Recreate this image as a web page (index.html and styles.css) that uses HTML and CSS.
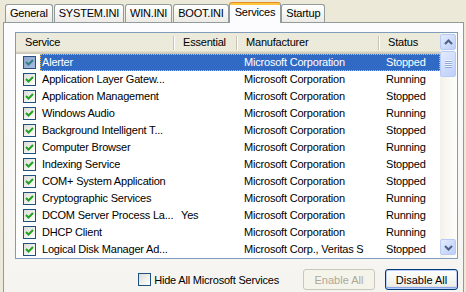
FILE: index.html
```html
<!DOCTYPE html>
<html lang="en">
<head>
    <meta charset="UTF-8">
    <title>System Configuration Utility - Services</title>
    <link rel="stylesheet" href="styles.css">
</head>
<body>
    <div class="dialog">
        <div class="tabs">
            <div class="tab">General</div>
            <div class="tab">SYSTEM.INI</div>
            <div class="tab">WIN.INI</div>
            <div class="tab">BOOT.INI</div>
            <div class="tab active">Services</div>
            <div class="tab">Startup</div>
        </div>
        <div class="page">
            <div class="listview">
                <div class="list-main">
                    <div class="list-header">
                        <div class="hcol">Service</div>
                        <div class="hcol">Essential</div>
                        <div class="hcol">Manufacturer</div>
                        <div class="hcol last">Status</div>
                    </div>
                    <div class="list-rows">
                        <div class="row selected">
                            <div class="cell name"><span class="cb on"><svg width="11" height="11" viewBox="0 0 11 11"><polyline points="2,5 4.5,7.5 9,3" /></svg></span><span class="label">Alerter</span></div>
                            <div class="cell"></div>
                            <div class="cell">Microsoft Corporation</div>
                            <div class="cell">Stopped</div>
                        </div>
                        <div class="row">
                            <div class="cell name"><span class="cb on"><svg width="11" height="11" viewBox="0 0 11 11"><polyline points="2,5 4.5,7.5 9,3" /></svg></span><span class="label">Application Layer Gatew...</span></div>
                            <div class="cell"></div>
                            <div class="cell">Microsoft Corporation</div>
                            <div class="cell">Running</div>
                        </div>
                        <div class="row">
                            <div class="cell name"><span class="cb on"><svg width="11" height="11" viewBox="0 0 11 11"><polyline points="2,5 4.5,7.5 9,3" /></svg></span><span class="label">Application Management</span></div>
                            <div class="cell"></div>
                            <div class="cell">Microsoft Corporation</div>
                            <div class="cell">Stopped</div>
                        </div>
                        <div class="row">
                            <div class="cell name"><span class="cb on"><svg width="11" height="11" viewBox="0 0 11 11"><polyline points="2,5 4.5,7.5 9,3" /></svg></span><span class="label">Windows Audio</span></div>
                            <div class="cell"></div>
                            <div class="cell">Microsoft Corporation</div>
                            <div class="cell">Running</div>
                        </div>
                        <div class="row">
                            <div class="cell name"><span class="cb on"><svg width="11" height="11" viewBox="0 0 11 11"><polyline points="2,5 4.5,7.5 9,3" /></svg></span><span class="label">Background Intelligent T...</span></div>
                            <div class="cell"></div>
                            <div class="cell">Microsoft Corporation</div>
                            <div class="cell">Stopped</div>
                        </div>
                        <div class="row">
                            <div class="cell name"><span class="cb on"><svg width="11" height="11" viewBox="0 0 11 11"><polyline points="2,5 4.5,7.5 9,3" /></svg></span><span class="label">Computer Browser</span></div>
                            <div class="cell"></div>
                            <div class="cell">Microsoft Corporation</div>
                            <div class="cell">Running</div>
                        </div>
                        <div class="row">
                            <div class="cell name"><span class="cb on"><svg width="11" height="11" viewBox="0 0 11 11"><polyline points="2,5 4.5,7.5 9,3" /></svg></span><span class="label">Indexing Service</span></div>
                            <div class="cell"></div>
                            <div class="cell">Microsoft Corporation</div>
                            <div class="cell">Stopped</div>
                        </div>
                        <div class="row">
                            <div class="cell name"><span class="cb on"><svg width="11" height="11" viewBox="0 0 11 11"><polyline points="2,5 4.5,7.5 9,3" /></svg></span><span class="label">COM+ System Application</span></div>
                            <div class="cell"></div>
                            <div class="cell">Microsoft Corporation</div>
                            <div class="cell">Stopped</div>
                        </div>
                        <div class="row">
                            <div class="cell name"><span class="cb on"><svg width="11" height="11" viewBox="0 0 11 11"><polyline points="2,5 4.5,7.5 9,3" /></svg></span><span class="label">Cryptographic Services</span></div>
                            <div class="cell"></div>
                            <div class="cell">Microsoft Corporation</div>
                            <div class="cell">Running</div>
                        </div>
                        <div class="row">
                            <div class="cell name"><span class="cb on"><svg width="11" height="11" viewBox="0 0 11 11"><polyline points="2,5 4.5,7.5 9,3" /></svg></span><span class="label">DCOM Server Process La...</span></div>
                            <div class="cell">Yes</div>
                            <div class="cell">Microsoft Corporation</div>
                            <div class="cell">Running</div>
                        </div>
                        <div class="row">
                            <div class="cell name"><span class="cb on"><svg width="11" height="11" viewBox="0 0 11 11"><polyline points="2,5 4.5,7.5 9,3" /></svg></span><span class="label">DHCP Client</span></div>
                            <div class="cell"></div>
                            <div class="cell">Microsoft Corporation</div>
                            <div class="cell">Running</div>
                        </div>
                        <div class="row">
                            <div class="cell name"><span class="cb on"><svg width="11" height="11" viewBox="0 0 11 11"><polyline points="2,5 4.5,7.5 9,3" /></svg></span><span class="label">Logical Disk Manager Ad...</span></div>
                            <div class="cell"></div>
                            <div class="cell">Microsoft Corp., Veritas S</div>
                            <div class="cell">Stopped</div>
                        </div>
                    </div>
                </div>
                <div class="scrollbar">
                    <div class="sb-btn"><svg width="15" height="15" viewBox="0 0 15 15"><polyline points="4,9 7.5,5.5 11,9" /></svg></div>
                    <div class="sb-thumb"><svg width="7" height="8" viewBox="0 0 7 8"><path d="M0 0.5H7M0 2.5H7M0 4.5H7M0 6.5H7" /></svg></div>
                    <div class="sb-track"></div>
                    <div class="sb-btn"><svg width="15" height="15" viewBox="0 0 15 15"><polyline points="4,6 7.5,9.5 11,6" /></svg></div>
                </div>
            </div>
            <div class="actions">
                <label class="hide-ms"><span class="cb"></span>Hide All Microsoft Services</label>
                <button class="btn" disabled>Enable All</button>
                <button class="btn default">Disable All</button>
            </div>
        </div>
    </div>
</body>
</html>
```

FILE: styles.css
```css
body {
    margin: 0;
    background-color: #ece9d8; /* XP dialog face */
    font-family: "Liberation Sans", Arial, sans-serif;
    font-size: 11px;
    letter-spacing: -0.2px;
    color: #000;
}

.dialog {
    width: 466px;
    height: 292px;
    overflow: hidden;
}

/* tab strip */
.tabs {
    display: flex;
    align-items: flex-end;
    height: 22px;
    padding-left: 5px;
}

.tab {
    box-sizing: border-box;
    height: 18px;
    line-height: 16px;
    padding: 0 4px;
    margin-right: 1px;
    border: 1px solid #919b9c;
    border-bottom: none;
    border-radius: 3px 3px 0 0;
    background: linear-gradient(#ffffff, #ecebe6);
}

.tab.active {
    position: relative;
    z-index: 2;
    height: 21px;
    line-height: 19px;
    margin: 0 0 -1px -1px;
    padding: 0 5px;
    border-top-color: #e68b2c;
    background: linear-gradient(#ffc73c 0, #ffc73c 2px, #fcfcfe 2px);
}

/* tab page */
.page {
    box-sizing: border-box;
    width: 461px;
    height: 300px;
    margin-left: 3px;
    padding: 9px 0 0 11px;
    border: 1px solid #919b9c;
    background: linear-gradient(#fcfcfe, #f4f3ee);
}

.listview {
    box-sizing: border-box;
    display: flex;
    width: 443px;
    height: 227px;
    border: 1px solid #7f9db9;
    background-color: #fff;
}

.list-main {
    flex: 1;
    overflow: hidden;
}

.list-header,
.row {
    display: grid;
    grid-template-columns: 158px 63px 142px 61px;
}

.list-header {
    height: 21px;
    line-height: 19px;
    background-color: #ebeadb;
    box-shadow: inset 0 -1px #cbc7b8, inset 0 -2px #d6d2c2, inset 0 -3px #e2decd;
}

.hcol {
    position: relative;
    padding-left: 9px;
}

.hcol::after {
    content: "";
    position: absolute;
    right: 0;
    top: 3px;
    width: 1px;
    height: 14px;
    background-color: #c7c5b2;
    box-shadow: 1px 0 #fff;
}

.hcol.last::after {
    display: none;
}

.list-rows {
    height: 204px;
    overflow: hidden;
}

.row {
    position: relative;
    height: 17px;
    line-height: 17px;
}

.cell {
    padding-left: 7px;
    white-space: nowrap;
    overflow: hidden;
}

.cell.name {
    display: flex;
    align-items: center;
}

.cell.name .label {
    padding: 0 2px;
    margin-left: 4px;
}

.row.selected {
    color: #fff;
}

.row.selected::before {
    content: "";
    position: absolute;
    left: 24px;
    right: 0;
    top: 0;
    bottom: 0;
    z-index: 0;
    box-sizing: border-box;
    background-color: #316ac5;
    border: 1px dotted #f3b64a;
}

.row.selected .cell {
    position: relative;
    z-index: 1;
}

/* checkboxes */
.cb {
    box-sizing: border-box;
    display: inline-block;
    flex: none;
    width: 13px;
    height: 13px;
    border: 1px solid #1c5180;
    background: linear-gradient(135deg, #dcdcd7, #ffffff);
}

.cb svg {
    display: block;
}

.cb polyline {
    fill: none;
    stroke: #21a121;
    stroke-width: 2;
}

.row.selected .cb {
    background: linear-gradient(135deg, #8ea4cb, #a9bde2);
    border-color: #2a4f7e;
}

.row.selected .cb polyline {
    stroke: #2f8183;
}

/* scrollbar */
.scrollbar {
    display: flex;
    flex-direction: column;
    width: 17px;
    background: linear-gradient(to right, #f3f1ec, #fefefb);
}

.sb-btn,
.sb-thumb {
    box-sizing: border-box;
    width: 16px;
    border: 1px solid #b7cbf5;
    border-radius: 2px;
    background: linear-gradient(135deg, #e3ebfe, #bccefa);
}

.sb-btn {
    height: 16px;
    margin-top: 1px;
}

.sb-btn svg {
    display: block;
}

.sb-btn polyline {
    fill: none;
    stroke: #4d6185;
    stroke-width: 2;
}

.sb-thumb {
    display: flex;
    align-items: center;
    justify-content: center;
    height: 26px;
    margin-top: 1px;
}

.sb-thumb path {
    stroke: #eef3fe;
    stroke-width: 1;
}

.sb-thumb svg {
    filter: drop-shadow(0 1px 0 #8fa9e6);
}

.sb-track {
    flex: 1;
}

.scrollbar .sb-btn:last-child {
    margin: 0 0 3px 0;
}

/* bottom row */
.actions {
    display: flex;
    align-items: center;
    justify-content: flex-end;
    width: 443px;
    margin-top: 10px;
    gap: 10px;
}

.hide-ms {
    display: flex;
    align-items: center;
    gap: 3px;
    margin-right: 14px;
}

.btn {
    box-sizing: border-box;
    width: 72px;
    height: 21px;
    padding: 0;
    font: inherit;
    border: 1px solid #003c74;
    border-radius: 3px;
    background: linear-gradient(#fefefe, #f0f0ea 80%, #d6d0c5);
    color: #000;
}

.btn:disabled {
    border-color: #c9c7ba;
    background: #f5f4ea;
    color: #aca899;
}

.btn.default {
    width: 73px;
    box-shadow: inset 0 0 0 1px #bccffa, inset 0 -1px 0 1px #8aa6ec;
}
```
